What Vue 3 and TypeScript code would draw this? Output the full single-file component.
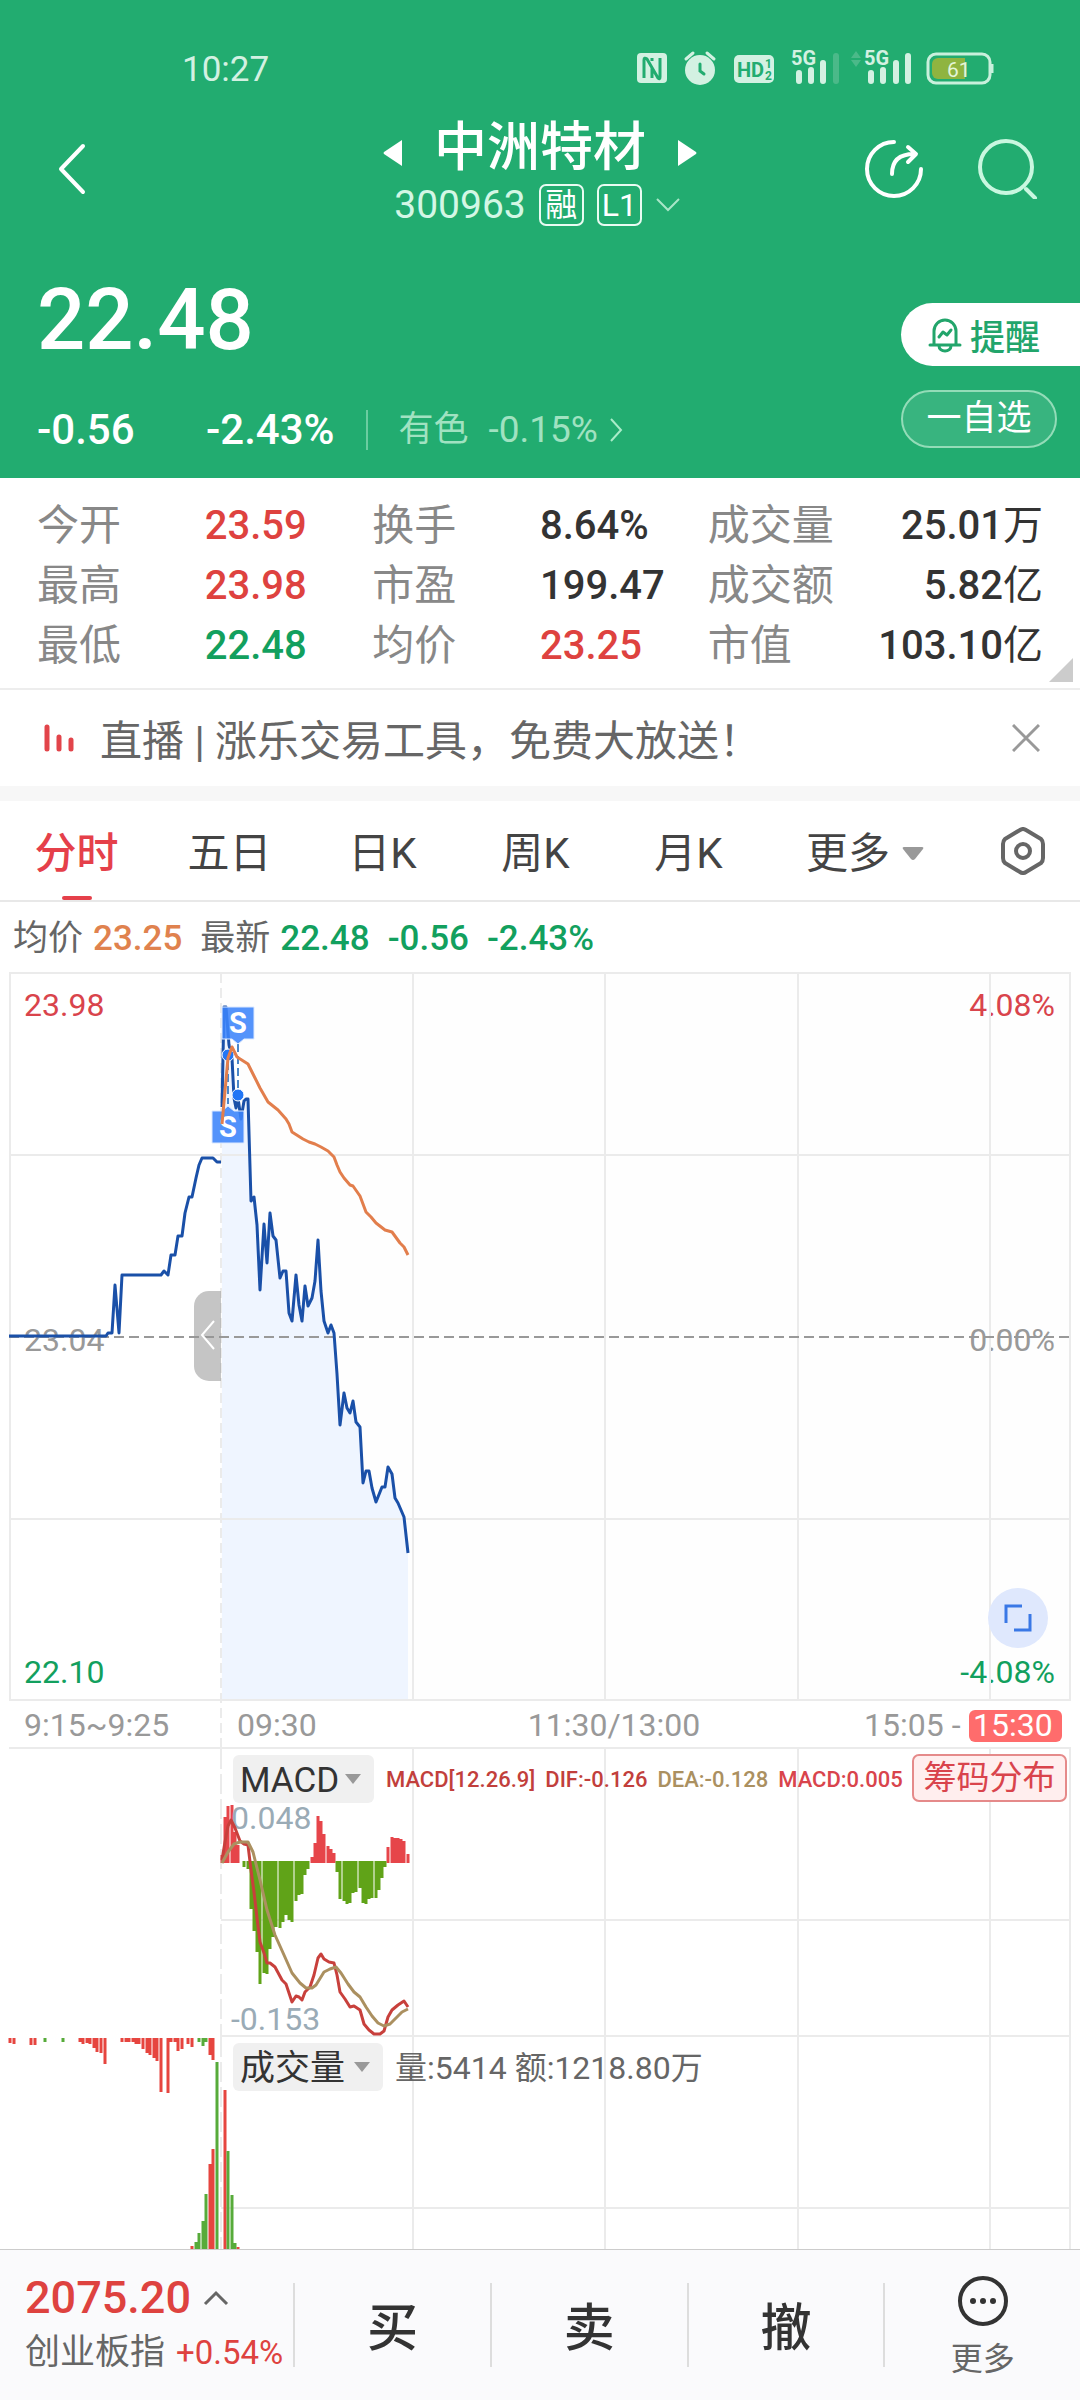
<script setup lang="ts">
import { ref } from 'vue'

type Tone = 'up' | 'down' | 'flat'
interface Stat { label: string; value: string; unit?: string; tone: Tone }
type Bar = [x: number, y: number]

const stats: Stat[] = [
  { label: '今开', value: '23.59', tone: 'up' },
  { label: '换手', value: '8.64%', tone: 'flat' },
  { label: '成交量', value: '25.01', unit: '万', tone: 'flat' },
  { label: '最高', value: '23.98', tone: 'up' },
  { label: '市盈', value: '199.47', tone: 'flat' },
  { label: '成交额', value: '5.82', unit: '亿', tone: 'flat' },
  { label: '最低', value: '22.48', tone: 'down' },
  { label: '均价', value: '23.25', tone: 'up' },
  { label: '市值', value: '103.10', unit: '亿', tone: 'flat' },
]

const tabs: string[] = ['分时', '五日', '日K', '周K', '月K']
const activeTab = ref<string>('分时')
const macdIndicator = ref<string>('MACD')
const volumeIndicator = ref<string>('成交量')
const trades: string[] = ['买', '卖', '撤']

// All three panels share one coordinate space, 1080 units wide.
const gridX: number[] = [413, 605, 798, 990, 1070]

const preOpen = '9,1336 106,1336 108,1333 112,1333 115,1285 119,1333 122,1275 161,1275 164,1271 168,1275 171,1255 175,1255 178,1236 182,1236 185,1213 189,1197 192,1197 196,1178 199,1165 202,1158 213,1158 217,1162 221,1162'
const price = '222,1107 224,1007 226,1007 229,1045 232,1058 234,1098 236,1108 238,1098 241,1119 244,1101 246,1099 248,1099 251,1201 254,1197 257,1225 260,1290 264,1224 267,1263 270,1213 273,1236 276,1240 280,1278 283,1271 286,1271 289,1313 292,1321 296,1275 299,1305 302,1321 305,1286 308,1306 312,1298 315,1281 318,1240 321,1291 324,1321 328,1333 331,1325 334,1333 337,1374 340,1425 344,1393 347,1408 350,1413 353,1401 356,1422 360,1427 363,1483 366,1471 369,1471 372,1488 376,1502 382,1487 385,1487 388,1467 392,1474 395,1498 398,1503 404,1517 408,1553'
const average = '222,1124 228,1058 232,1047 237,1057 248,1064 254,1076 260,1088 268,1102 278,1110 286,1119 289,1124 292,1132 303,1139 309,1142 315,1144 321,1147 328,1151 334,1157 337,1165 340,1172 344,1178 350,1185 353,1186 360,1196 366,1212 371,1217 376,1223 385,1230 392,1232 400,1243 404,1247 408,1255'
const priceArea = `${price} 408,1700 222,1700`

const macdUp: Bar[] = [
  [222, 1855], [225, 1817], [228, 1806], [232, 1805], [235, 1832], [238, 1845],
  [312, 1857], [315, 1843], [318, 1816], [321, 1821], [324, 1834], [328, 1846], [331, 1849], [334, 1853],
  [388, 1847], [392, 1837], [395, 1838], [398, 1838], [401, 1839], [404, 1841], [408, 1854],
]
const macdDown: Bar[] = [
  [244, 1867], [248, 1869], [251, 1909], [254, 1931], [257, 1952], [260, 1984], [264, 1973], [267, 1974],
  [270, 1949], [273, 1937], [276, 1927], [280, 1928], [283, 1922], [286, 1915], [289, 1920], [292, 1922],
  [296, 1901], [299, 1895], [302, 1894], [305, 1875], [308, 1869], [337, 1872], [340, 1899], [344, 1901],
  [347, 1904], [350, 1903], [353, 1893], [356, 1892], [360, 1888], [363, 1903], [366, 1904], [369, 1899],
  [372, 1898], [376, 1898], [379, 1890], [382, 1878], [385, 1867],
]
const dif = '222,1860 225,1842 228,1826 231,1820 235,1828 240,1841 244,1844 248,1845 251,1870 254,1892 257,1918 260,1942 264,1953 267,1963 270,1963 275,1967 282,1980 286,1984 292,2002 296,1996 299,1997 302,2000 305,1992 310,1987 314,1975 318,1958 321,1954 324,1959 329,1962 334,1963 337,1975 340,1992 345,1999 350,2007 354,2006 360,2010 364,2024 369,2030 374,2034 380,2034 384,2031 388,2017 392,2010 398,2005 404,2001 408,2007'
const dea = '222,1863 228,1852 234,1844 240,1842 248,1842 253,1852 260,1880 267,1910 275,1935 284,1955 292,1973 300,1983 306,1988 312,1988 316,1985 324,1972 330,1969 336,1967 341,1973 348,1984 354,1992 360,1997 366,2007 372,2016 378,2023 384,2026 390,2024 396,2018 402,2012 408,2009'

const unmatchedUp: Bar[] = [
  [10, 2043], [14, 2044], [31, 2045], [35, 2045], [80, 2042], [83, 2044], [87, 2043], [90, 2044], [94, 2048],
  [97, 2052], [101, 2053], [105, 2064], [122, 2042], [126, 2042], [129, 2042], [133, 2042], [136, 2044],
  [139, 2044], [143, 2049], [147, 2053], [150, 2055], [154, 2058], [157, 2061], [161, 2092], [168, 2093],
  [171, 2042], [175, 2042], [178, 2051], [182, 2049], [188, 2044], [192, 2047], [210, 2055], [213, 2060],
]
const unmatchedDown: Bar[] = [[45, 2042], [63, 2042], [199, 2042], [203, 2046], [206, 2042]]
const volumeUp: Bar[] = [[192, 2246], [210, 2164], [213, 2149], [225, 2090], [238, 2247]]
const volumeDown: Bar[] = [[196, 2242], [199, 2233], [203, 2221], [206, 2194], [217, 2062], [228, 2151], [232, 2195], [235, 2243]]

function bars(list: Bar[], base: number): string {
  return list.map(([x, y]) => `M${x} ${base}V${y}`).join('')
}
</script>

<template>
  <div class="page">
    <header class="head">
      <div class="status">
        <span class="clock">10:27</span>
        <svg class="status-icons" width="360" height="48" viewBox="635 42 360 48" aria-hidden="true">
          <rect x="637" y="53" width="30" height="30" rx="4" fill="#d3f1e2" />
          <path d="M644 78V60q0-3 3-1l11 19q2 2 2-1V58M652 78V67M652 58v3" fill="none" stroke="#22ac70" stroke-width="3" />
          <circle cx="700" cy="70" r="15" fill="#d3f1e2" />
          <path d="M686 59l7-6M714 59l-7-6" stroke="#d3f1e2" stroke-width="3" stroke-linecap="round" />
          <path d="M700 64v7l4 3" fill="none" stroke="#22ac70" stroke-width="3" stroke-linecap="round" />
          <rect x="734" y="55" width="40" height="28" rx="5" fill="#d3f1e2" />
          <text x="737" y="77" font-size="20" font-weight="700" fill="#22ac70">HD</text>
          <text x="765" y="68" font-size="12" font-weight="700" fill="#22ac70">1</text>
          <text x="765" y="80" font-size="12" font-weight="700" fill="#22ac70">2</text>
          <text x="791" y="65" font-size="20" font-weight="700" fill="#d3f1e2">5G</text>
          <path d="M799 73v8M811 70v11M823 63v18" stroke="#d3f1e2" stroke-width="6" stroke-linecap="round" />
          <path d="M836 56v25" stroke="#4bb989" stroke-width="6" stroke-linecap="round" />
          <path d="M851 58l5-7 5 7zM851 60l5 7 5-7z" fill="#4bb989" />
          <text x="864" y="65" font-size="20" font-weight="700" fill="#d3f1e2">5G</text>
          <path d="M871 73v8M883 70v11M896 63v18M908 56v25" stroke="#d3f1e2" stroke-width="6" stroke-linecap="round" />
          <rect x="928" y="54" width="62" height="29" rx="8" fill="none" stroke="#c9f0dc" stroke-width="3" />
          <path d="M938 58h27v21h-27a6 6 0 0 1-6-6v-9a6 6 0 0 1 6-6z" fill="#8fb440" />
          <path d="M992 64v9" stroke="#c9f0dc" stroke-width="3" />
          <text x="947" y="77" font-size="21" fill="#e3f5d8">61</text>
        </svg>
      </div>

      <nav class="nav">
        <button class="icon-btn back" aria-label="返回">
          <svg width="30" height="52" viewBox="0 0 30 52"><path d="M26 3L4 26l22 23" fill="none" stroke="#fff" stroke-width="4" stroke-linecap="round" stroke-linejoin="round" /></svg>
        </button>
        <div class="name-box">
          <div class="name-row">
            <button class="icon-btn" aria-label="上一只"><svg width="20" height="28" viewBox="0 0 20 28"><path d="M19 1v26L1 15q-1-1 0-2z" fill="#fff" /></svg></button>
            <h1 class="name">中洲特材</h1>
            <button class="icon-btn" aria-label="下一只"><svg width="20" height="28" viewBox="0 0 20 28"><path d="M1 1v26l18-12q1-1 0-2z" fill="#fff" /></svg></button>
          </div>
          <div class="code-row">
            <span class="code">300963</span>
            <span class="badge">融</span>
            <span class="badge">L1</span>
            <svg width="26" height="16" viewBox="0 0 26 16"><path d="M2 2l11 11L24 2" fill="none" stroke="#a9e6c8" stroke-width="2" /></svg>
          </div>
        </div>
        <div class="nav-actions">
          <button class="icon-btn" aria-label="分享">
            <svg width="60" height="60" viewBox="0 0 60 60" fill="none" stroke="#fff" stroke-width="4" stroke-linecap="round" stroke-linejoin="round"><path d="M30 3A27 27 0 1 0 57 30" /><path d="M28 35c0-13 7-20 22-20M44 8l8 7-8 8" /></svg>
          </button>
          <button class="icon-btn" aria-label="搜索">
            <svg width="60" height="60" viewBox="0 0 60 60" fill="none" stroke="#c9f7e0" stroke-width="4" stroke-linecap="round"><circle cx="28" cy="28" r="26" /><path d="M48 50l9 9" /></svg>
          </button>
        </div>
      </nav>

      <section class="quote">
        <div>
          <div class="last">22.48</div>
          <div class="change">
            <span class="diff">-0.56</span>
            <span>-2.43%</span>
            <a class="sector" href="#">
              <span>有色</span><span class="sector-value">-0.15%</span>
              <svg width="16" height="24" viewBox="0 0 16 24"><path d="M3 1l10 11L3 23" fill="none" stroke="#a9ecc9" stroke-width="2" /></svg>
            </a>
          </div>
        </div>
        <div class="quote-actions">
          <button class="remind">
            <svg width="34" height="36" viewBox="0 0 34 36" fill="none" stroke="#22a56b" stroke-width="3" stroke-linecap="round" stroke-linejoin="round"><path d="M6 27V14a11 11 0 0 1 22 0v13M2 28h30M11 29a6 5 0 0 0 12 0M11 20l4-5 4 3 4-5" /></svg>
            提醒
          </button>
          <button class="watch">一自选</button>
        </div>
      </section>
    </header>

    <dl class="stats">
      <div v-for="s in stats" :key="s.label" class="stat">
        <dt>{{ s.label }}</dt>
        <dd :class="s.tone">{{ s.value }}<span v-if="s.unit" class="unit">{{ s.unit }}</span></dd>
      </div>
      <svg class="corner" width="24" height="24" viewBox="0 0 24 24" aria-hidden="true"><path d="M24 0v24H0z" fill="#ccc" /></svg>
    </dl>

    <div class="ticker">
      <svg width="32" height="30" viewBox="0 0 32 30" fill="none" stroke="#e2444a" stroke-width="5" stroke-linecap="round"><path d="M3 4v22M15 14v12M27 17v9" /></svg>
      <a class="ticker-text" href="#">直播 | 涨乐交易工具，免费大放送！</a>
      <button class="icon-btn" aria-label="关闭"><svg width="28" height="28" viewBox="0 0 28 28"><path d="M1 1l26 26M27 1L1 27" stroke="#999" stroke-width="3" /></svg></button>
    </div>

    <nav class="tabs">
      <button v-for="t in tabs" :key="t" class="tab" :class="{ active: t === activeTab }" @click="activeTab = t">{{ t }}</button>
      <button class="tab more">更多<svg width="22" height="14" viewBox="0 0 22 14"><path d="M2 0h18q2 0 1 2l-8 10q-2 2-4 0L1 2Q0 0 2 0z" fill="#999" /></svg></button>
      <button class="tab gear" aria-label="设置">
        <svg width="46" height="48" viewBox="0 0 46 48" fill="none" stroke="#666" stroke-width="4" stroke-linejoin="round"><path d="M20 3q3-2 6 0l15 9q2 2 2 5v14q0 3-2 5l-15 9q-3 2-6 0l-15-9q-2-2-2-5v-14q0-3 2-5z" /><circle cx="23" cy="24" r="7" /></svg>
      </button>
    </nav>

    <div class="legend">
      <span>均价</span><span class="avg">23.25</span>
      <span class="legend-last">最新</span><span class="down">22.48</span>
      <span class="down legend-num">-0.56</span><span class="down legend-num">-2.43%</span>
    </div>

    <section class="panel">
      <svg class="plot" viewBox="0 972 1080 777">
        <rect x="221" y="972" width="849" height="728" fill="#fefefe" />
        <g class="labels">
          <text x="24" y="1016" fill="#d9444c">23.98</text>
          <text x="1055" y="1016" text-anchor="end" fill="#d9444c">4.08%</text>
          <text x="24" y="1351" fill="#999">23.04</text>
          <text x="1055" y="1351" text-anchor="end" fill="#999">0.00%</text>
          <text x="24" y="1683" fill="#12a05e">22.10</text>
          <text x="1055" y="1683" text-anchor="end" fill="#12a05e">-4.08%</text>
        </g>
        <polygon :points="priceArea" fill="#eff5ff" />
        <g class="grid">
          <path d="M9 973H1071M9 1155H1071M9 1519H1071M9 1700H1071M9 1748H1071M10 973V1700" />
          <path v-for="x in gridX" :key="x" :d="`M${x} 973V1700`" />
          <path d="M221 973V1748" stroke-dasharray="10 5" />
        </g>
        <path d="M9 1337H1070" stroke="#999" stroke-width="2" stroke-dasharray="10 5" />
        <polyline :points="preOpen" class="line price" />
        <polyline :points="price" class="line price" />
        <path d="M228 1062V1104M238 1044V1090" stroke="#4a86c8" stroke-width="2" stroke-dasharray="8 4" />
        <g fill="#2276f5" stroke="#fff" stroke-width="1">
          <circle cx="228" cy="1055" r="6" />
          <circle cx="238" cy="1095" r="6" />
        </g>
        <g fill="#3c84fa" fill-opacity="0.88" stroke="#dce9ff" stroke-width="1">
          <path d="M222 1007h32v32h-10l-6 5-6-5h-10z" />
          <path d="M212 1111h10l6-5 6 5h10v32h-32z" />
        </g>
        <g font-size="29" font-weight="700" text-anchor="middle" fill="#fff">
          <text x="238" y="1033">S</text>
          <text x="228" y="1137">S</text>
        </g>
        <polyline :points="average" class="line average" />
        <g class="labels" fill="#999">
          <text x="24" y="1736">9:15~9:25</text>
          <text x="237" y="1736">09:30</text>
          <text x="614" y="1736" text-anchor="middle">11:30/13:00</text>
          <text x="864" y="1736">15:05 -</text>
          <rect x="969" y="1710" width="93" height="32" rx="6" fill="#ff6c6c" />
          <text x="973" y="1736" fill="#fff">15:30</text>
        </g>
      </svg>
      <button class="handle" aria-label="收起集合竞价"><svg viewBox="0 0 27 90"><path d="M20 30L8 44l12 14" fill="none" stroke="#fff" stroke-width="2" /></svg></button>
      <button class="expand" aria-label="全屏"><svg viewBox="0 0 60 60"><path d="M18 35V18h16M26 42h16V26" fill="none" stroke="#3a78e6" stroke-width="3" /></svg></button>
    </section>

    <section class="panel">
      <svg class="plot" viewBox="0 1749 1080 288">
        <g class="grid">
          <path d="M221 1920H1071M221 2036H1071" />
          <path v-for="x in gridX" :key="x" :d="`M${x} 1749V2037`" />
          <path d="M221 1749V2037" stroke-dasharray="20 5" />
        </g>
        <path :d="bars(macdUp, 1863)" stroke="#e6454a" stroke-width="3" />
        <path :d="bars(macdDown, 1861)" stroke="#60a318" stroke-width="3" />
        <g class="labels" fill="#9aabb6">
          <text x="231" y="1829">0.048</text>
          <text x="231" y="2030">-0.153</text>
        </g>
        <polyline :points="dif" class="line" stroke="#c8403c" />
        <polyline :points="dea" class="line" stroke="#ab9060" />
      </svg>
      <div class="panel-head">
        <label class="pick macd-pick">
          <select v-model="macdIndicator" aria-label="副图指标一"><option>MACD</option><option>KDJ</option></select>
          <svg width="16" height="10" viewBox="0 0 16 10"><path d="M0 0h16L8 10z" fill="#999" /></svg>
        </label>
        <span class="macd-values"><span>MACD[12.26.9]</span><span>DIF:-0.126</span><span class="dea">DEA:-0.128</span><span class="macd">MACD:0.005</span></span>
        <button class="chips">筹码分布</button>
      </div>
    </section>

    <section class="panel">
      <svg class="plot" viewBox="0 2037 1080 212">
        <g class="grid">
          <path d="M221 2208H1071" />
          <path v-for="x in gridX" :key="x" :d="`M${x} 2037V2249`" />
          <path d="M221 2037V2249" stroke-dasharray="20 5" />
        </g>
        <path :d="bars(unmatchedUp, 2038) + bars(volumeUp, 2249)" stroke="#e6453f" stroke-width="3" />
        <path :d="bars(unmatchedDown, 2038) + bars(volumeDown, 2249)" stroke="#57ab3a" stroke-width="3" />
      </svg>
      <div class="panel-head">
        <label class="pick">
          <select v-model="volumeIndicator" aria-label="副图指标二"><option>成交量</option><option>成交额</option></select>
          <svg width="16" height="10" viewBox="0 0 16 10"><path d="M0 0h16L8 10z" fill="#999" /></svg>
        </label>
        <span class="volume-values">量:5414 额:1218.80万</span>
      </div>
    </section>

    <footer class="bottom">
      <div class="index">
        <div class="index-value">2075.20<svg width="26" height="16" viewBox="0 0 26 16"><path d="M2 14L13 3l11 11" fill="none" stroke="#666" stroke-width="3" /></svg></div>
        <div class="index-name">创业板指<span>+0.54%</span></div>
      </div>
      <button v-for="t in trades" :key="t" class="trade">{{ t }}</button>
      <button class="trade more-btn">
        <svg width="52" height="52" viewBox="0 0 52 52"><circle cx="26" cy="26" r="23" fill="none" stroke="#333" stroke-width="4" /><g fill="#333"><circle cx="16" cy="26" r="3" /><circle cx="26" cy="26" r="3" /><circle cx="36" cy="26" r="3" /></g></svg>
        更多
      </button>
    </footer>
  </div>
</template>

<style>
body {
  margin: 0;
  background: #fff;
}
</style>

<style scoped>
.page {
  font-family: Roboto, "Noto Sans CJK SC", sans-serif;
  color: #333;
  min-height: 100vh;
  background: #fff;
}
button,
select {
  font: inherit;
  color: inherit;
  background: none;
  border: 0;
  padding: 0;
  margin: 0;
}
a {
  color: inherit;
  text-decoration: none;
}
svg {
  display: block;
  flex: none;
}
.icon-btn {
  display: flex;
}
.up { color: #de423f; }
.down { color: #12a05e; }
.flat { color: #333; }

.head {
  background: #22ac70;
  color: #fff;
}
.status {
  display: flex;
  justify-content: space-between;
  align-items: center;
  padding: 42px 85px 0 182px;
}
.clock {
  padding-top: 7px;
  font-size: 35px;
  line-height: 40px;
  color: #d3f1e2;
}
.nav {
  display: grid;
  grid-template-columns: 1fr auto 1fr;
  align-items: center;
  padding: 28px 42px 0 57px;
}
.back,
.nav-actions {
  padding-bottom: 8px;
}
.name-box {
  margin-right: 15px;
}
.name-row,
.code-row {
  display: flex;
  align-items: center;
  justify-content: center;
}
.name-row {
  gap: 31px;
}
.name-row .icon-btn {
  padding-top: 10px;
}
.name {
  margin: 0;
  font-size: 53px;
  line-height: 60px;
  font-weight: 500;
}
.code-row {
  margin: 4px 5px 0 0;
  gap: 13px;
}
.code {
  font-size: 39px;
  line-height: 46px;
  color: #d3f7e5;
}
.badge {
  box-sizing: border-box;
  width: 45px;
  height: 42px;
  border: 2px solid #e9fbf2;
  border-radius: 7px;
  font-size: 32px;
  line-height: 38px;
  text-align: center;
}
.nav-actions {
  display: flex;
  justify-content: flex-end;
  gap: 54px;
}
.quote {
  display: flex;
  justify-content: space-between;
  padding-left: 37px;
}
.last {
  margin-top: 52px;
  font-size: 85px;
  line-height: 80px;
  font-weight: 500;
}
.change {
  display: flex;
  align-items: center;
  margin-top: 46px;
  padding-bottom: 24px;
  font-size: 42px;
  line-height: 48px;
  font-weight: 500;
}
.diff {
  width: 169px;
}
.sector {
  display: flex;
  align-items: center;
  gap: 20px;
  margin-left: 32px;
  padding-left: 30px;
  border-left: 2px solid #6bcda0;
  font-size: 35px;
  line-height: 40px;
  font-weight: 400;
  color: #a0e2c1;
}
.sector-value {
  font-size: 37px;
}
.sector svg {
  margin-left: -10px;
}
.quote-actions {
  display: flex;
  flex-direction: column;
  gap: 24px;
  padding-top: 75px;
  width: 179px;
}
.remind {
  display: flex;
  align-items: center;
  gap: 8px;
  height: 63px;
  padding-left: 27px;
  border-radius: 32px 0 0 32px;
  background: #fff;
  color: #22a56b;
  font-size: 35px;
  font-weight: 500;
}
.watch {
  width: 156px;
  height: 58px;
  border: 2px solid #93dcb8;
  border-radius: 29px;
  background: #38b47f;
  font-size: 35px;
  line-height: 50px;
}

.stats {
  position: relative;
  display: grid;
  grid-template-columns: repeat(3, 1fr);
  margin: 0;
  padding: 18px 37px 12px;
  border-bottom: 2px solid #ededed;
}
.stat {
  display: flex;
  font-size: 42px;
  line-height: 60px;
}
.stat dt {
  width: 50%;
  color: #888;
}
.stat dd {
  margin: 0;
  font-size: 40px;
  font-weight: 500;
  white-space: nowrap;
}
.unit {
  font-weight: 400;
}
.stat:nth-child(3n) {
  justify-content: space-between;
}
.stat:nth-child(3n) dt {
  width: auto;
}
.corner {
  position: absolute;
  right: 7px;
  bottom: 6px;
}

.ticker {
  display: flex;
  align-items: center;
  padding: 24px 40px 24px 44px;
  border-bottom: 15px solid #f7f7f7;
}
.ticker-text {
  flex: 1;
  margin-left: 24px;
  padding-top: 8px;
  font-size: 42px;
  line-height: 40px;
  color: #666;
}

.tabs {
  display: flex;
  border-bottom: 2px solid #e8e8e8;
}
.tab {
  position: relative;
  display: flex;
  align-items: center;
  justify-content: center;
  flex: 153 1 0;
  font-size: 42px;
  line-height: 60px;
  padding: 23px 0 16px;
  color: #444;
}
.tab.active {
  color: #e5404a;
  font-weight: 500;
}
.tab.active::after {
  content: "";
  position: absolute;
  bottom: 0;
  width: 30px;
  height: 4px;
  border-radius: 2px;
  background: #e5404a;
}
.tab.more {
  flex-grow: 200;
  gap: 12px;
}
.tab.gear {
  flex-grow: 115;
  padding: 20px 0 19px;
}

.legend {
  display: flex;
  gap: 10px;
  padding: 4px 13px 0;
  font-size: 35px;
  line-height: 66px;
  color: #666;
}
.legend-last,
.legend-num {
  margin-left: 8px;
}
.avg {
  color: #e0824e;
}
.legend .down,
.legend .avg {
  font-weight: 500;
}

.panel {
  position: relative;
}
.plot {
  width: 100%;
  height: auto;
}
.labels {
  font-size: 32px;
}
.grid {
  stroke: #ebebeb;
  stroke-width: 2;
  fill: none;
}
.line {
  fill: none;
  stroke-width: 3;
  stroke-linejoin: round;
}
.price {
  stroke: #1a50a8;
}
.average {
  stroke: #e27e4c;
}
.handle {
  position: absolute;
  left: 18%;
  top: 41%;
  width: 27px;
  height: 90px;
  border-radius: 15px 0 0 15px;
  background: rgb(150 150 150 / 55%);
}
.expand {
  position: absolute;
  right: 3%;
  bottom: 13%;
  width: 60px;
  height: 60px;
  border-radius: 50%;
  background: #dfe8fd;
}
.panel-head {
  position: absolute;
  top: 3px;
  left: 0;
  right: 0;
  display: flex;
  align-items: center;
  padding: 0 13px 0 233px;
}
.pick {
  position: relative;
  display: flex;
  align-items: center;
  width: 150px;
  border-radius: 6px;
  background: #f0f0f0;
  margin-top: 3px;
}
.macd-pick {
  width: 141px;
}
.pick select {
  appearance: none;
  width: 100%;
  height: 48px;
  padding: 2px 0 0 7px;
  font-size: 35px;
}
.pick svg {
  position: absolute;
  right: 13px;
  pointer-events: none;
}
.macd-values {
  display: flex;
  flex: 1;
  gap: 10px;
  margin-left: 12px;
  padding-top: 4px;
  font-size: 22px;
  line-height: 30px;
  font-weight: 500;
  white-space: nowrap;
  color: #c23f3c;
}
.dea { color: #ab9060; }
.macd { color: #d9444c; }
.chips {
  width: 155px;
  height: 48px;
  border: 2px solid #e58a8a;
  border-radius: 7px;
  background: #ffeeee;
  color: #d9444c;
  font-size: 33px;
  line-height: 44px;
}
.volume-values {
  margin-left: 12px;
  padding-top: 4px;
  font-size: 32px;
  line-height: 40px;
  color: #666;
}

.bottom {
  display: flex;
  align-items: center;
  border-top: 1px solid #ccc;
  background: #fafafc;
  height: 150px;
}
.index {
  flex: 270 1 0;
  padding-left: 25px;
  white-space: nowrap;
}
.index-value {
  display: flex;
  align-items: center;
  gap: 12px;
  font-size: 45px;
  line-height: 48px;
  font-weight: 500;
  color: #de423f;
}
.index-name {
  margin-top: 11px;
  padding-bottom: 4px;
  font-size: 35px;
  line-height: 40px;
  color: #666;
}
.index-name span {
  margin-left: 11px;
  font-size: 33px;
  color: #de423f;
}
.trade {
  flex: 196 1 0;
  height: 84px;
  border-left: 2px solid #ddd;
  padding-top: 8px;
  font-size: 51px;
  font-weight: 500;
  line-height: 76px;
}
.more-btn {
  display: flex;
  flex-direction: column;
  align-items: center;
  justify-content: center;
  gap: 12px;
  padding-top: 4px;
  font-size: 32px;
  font-weight: 400;
  line-height: 40px;
  color: #666;
}
</style>
